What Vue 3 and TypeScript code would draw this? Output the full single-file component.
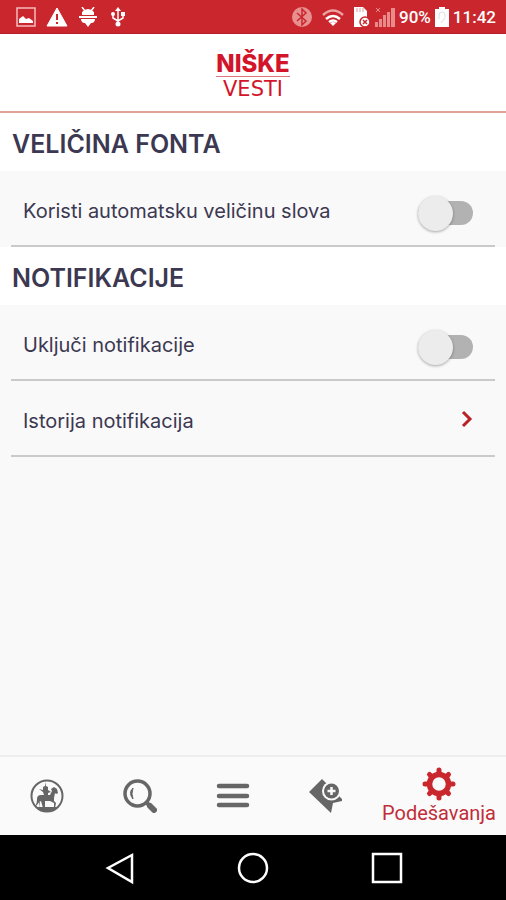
<script setup lang="ts">
import { ref } from 'vue'

const autoFont = ref(false)
const notifications = ref(false)
const activeTab = ref('settings')
</script>

<template>
  <div class="screen">
    <div class="status">
      <div class="status-left">
        <svg width="20" height="20" viewBox="0 0 20 20" aria-hidden="true">
          <path d="M1 1h18v18H1z" fill="none" stroke="#f5bcbc" stroke-width="1.5" />
          <path d="M3 16v-4l4-3 3 3 3-1 4 3v2z" fill="#fff" />
        </svg>
        <svg width="22" height="20" viewBox="0 0 22 20" aria-hidden="true">
          <path d="M11 1 21 19H1z" fill="#fff" stroke="#fff" stroke-linejoin="round" />
          <path d="M11 7v6M11 15v2" stroke="#c9272d" stroke-width="2" />
        </svg>
        <svg width="20" height="20" viewBox="0 0 20 20" aria-hidden="true">
          <path d="m4 0 3 4M16 0l-3 4" stroke="#fff" stroke-width="1.5" />
          <path d="M4 8V5q3-3 6-3t6 3v3zM1 9h18v2H1zM3 12h14q0 3-3 4h-1l-3 4-3-4H6q-3-1-3-4z" fill="#fff" />
        </svg>
        <svg width="20" height="20" viewBox="-3 0 20 20" aria-hidden="true">
          <path d="M7 3v14M7 14 2 11V6M7 14l5-3V7" fill="none" stroke="#fff" stroke-width="1.5" />
          <path d="m7 0 3 4H4zM10 5h4v4h-4z" fill="#fff" />
          <circle cx="2" cy="7" r="2" fill="#fff" />
          <circle cx="7" cy="17" r="2.5" fill="#fff" />
        </svg>
      </div>
      <div class="status-right">
        <svg width="22" height="22" viewBox="0 0 22 22" aria-hidden="true">
          <circle cx="11" cy="11" r="10" fill="#e88f8f" />
          <path d="m6 7 9 8-4 4V3l4 4-9 8" fill="none" stroke="#c9272d" stroke-width="1.5" />
        </svg>
        <svg class="wifi" width="24" height="20" viewBox="0 0 24 20" aria-hidden="true">
          <path d="M2 8q10-9 20 0" fill="none" stroke="#eda1a1" stroke-width="2.5" />
          <path d="M5 12q7-6 14 0M8 15q4-3 8 0" fill="none" stroke="#fff" stroke-width="2.5" />
          <path d="m9 16 3 3 3-3q-3-2-6 0z" fill="#fff" />
        </svg>
        <svg width="18" height="22" viewBox="0 0 18 22" aria-hidden="true">
          <path d="M1 1h9l4 4v16H1z" fill="#fff" />
          <path d="M4 2v4M7 2v4M10 2v4" stroke="#d99" />
          <circle cx="12" cy="16" r="5" fill="#fff" stroke="#c9272d" stroke-width="1.5" />
          <path d="m10 14 4 4m0-4-4 4" stroke="#c9272d" stroke-width="1.5" />
        </svg>
        <svg width="20" height="20" viewBox="0 0 20 20" aria-hidden="true">
          <path d="M0 15h3v5H0zM4 12h3v8H4zM8 8h3v12H8zM12 5h3v15h-3zM16 1h4v19h-4z" fill="#e98b8b" />
          <path d="m1 1 4 4m0-4L1 5" stroke="#e98b8b" />
        </svg>
        <span>90%</span>
        <svg width="14" height="20" viewBox="0 0 14 20" aria-hidden="true">
          <path d="M4 0h6v2h4v18H0V2h4z" fill="#fff" />
          <path d="M4 12V8q0-3 3-3t3 3v3L6 16" fill="none" stroke="#ddd" />
        </svg>
        <span>11:42</span>
      </div>
    </div>

    <header class="header">
      <div class="logo">
        <span class="logo-top">NIŠKE</span>
        <span class="logo-bottom">VESTI</span>
      </div>
    </header>

    <main class="content">
      <section>
        <h2>VELIČINA FONTA</h2>
        <div class="rows">
          <label class="row">
            <span>Koristi automatsku veličinu slova</span>
            <input v-model="autoFont" class="switch" type="checkbox" role="switch">
          </label>
        </div>
      </section>
      <section>
        <h2>NOTIFIKACIJE</h2>
        <div class="rows">
          <label class="row">
            <span>Uključi notifikacije</span>
            <input v-model="notifications" class="switch" type="checkbox" role="switch">
          </label>
          <a class="row" href="#istorija">
            <span>Istorija notifikacija</span>
            <svg class="chevron" width="12" height="18" viewBox="0 0 12 18" aria-hidden="true">
              <path d="m2 2 7 7-7 7" fill="none" stroke="#b92127" stroke-width="3" />
            </svg>
          </a>
        </div>
      </section>
    </main>

    <nav class="tabs">
      <button class="tab" type="button" aria-label="Početna" @click="activeTab = 'home'">
        <svg width="34" height="34" viewBox="0 0 34 34" aria-hidden="true">
          <circle cx="17" cy="17" r="15.5" fill="none" stroke="#666" stroke-width="2" />
          <path d="M5 27q2-2 2-7 0-4 4-4h3l-1-3-4-3 4 1V8l2-1V3l1 4 2 1v3l3 2-3 1v2h2l2-4-1-2 3-2 3 2 1 4-2 1-1-1-1 5v3l2 2-1 5-1-1v-4l-4-2h-5v7h-2l-2-7-2 1v6H9l1-7q-2 3-5 6z" fill="#666" />
          <path d="M7 28h20q-4 5-10 5T7 28z" fill="#666" />
        </svg>
      </button>
      <button class="tab" type="button" aria-label="Pretraga" @click="activeTab = 'search'">
        <svg width="34" height="34" viewBox="0 0 34 34" aria-hidden="true">
          <circle cx="14.5" cy="14.5" r="12.5" fill="none" stroke="#666" stroke-width="3.5" />
          <path d="M10 9q-5 5 0 11-2-5 0-11z" fill="#666" stroke="#666" />
          <path d="m23 23 4 4" stroke="#666" stroke-width="4" />
          <path d="m27 27 4 4" stroke="#666" stroke-width="6" stroke-linecap="round" />
        </svg>
      </button>
      <button class="tab" type="button" aria-label="Meni" @click="activeTab = 'menu'">
        <svg width="34" height="34" viewBox="0 0 34 34" aria-hidden="true">
          <path d="M3 7h28M3 17h28M3 26h28" stroke="#666" stroke-width="4.5" stroke-linecap="round" />
        </svg>
      </button>
      <button class="tab" type="button" aria-label="Sačuvano" @click="activeTab = 'saved'">
        <svg width="34" height="34" viewBox="0 0 34 34" aria-hidden="true">
          <path d="M13 0 33 20v2l-9 2-2 10L0 13z" fill="#666" />
          <circle cx="22.5" cy="12" r="9.5" fill="#fafafa" />
          <circle cx="22.5" cy="12" r="7.5" fill="#666" />
          <path d="M22.500 8v8M18.500 12h8" stroke="#fafafa" stroke-width="2.500" />
        </svg>
      </button>
      <button class="tab tab-wide" type="button" :aria-current="activeTab === 'settings' ? 'page' : undefined" @click="activeTab = 'settings'">
        <svg width="34" height="34" viewBox="0 0 34 34" aria-hidden="true">
          <path d="M17 3v5M17 26v5M3 17h5M26 17h5M7.500 7.500l3 3M23.500 23.500l3 3M7.500 26.500l3-3M23.500 10.500l3-3" stroke="#c9272d" stroke-width="5" stroke-linecap="round" />
          <circle cx="17" cy="17" r="9.500" fill="#fafafa" stroke="#c9272d" stroke-width="5.500" />
        </svg>
        <span>Podešavanja</span>
      </button>
    </nav>

    <div class="system">
      <button type="button" aria-label="Nazad">
        <svg width="32" height="34" viewBox="0 0 32 34" aria-hidden="true">
          <path d="M29 4v27L5 17z" fill="none" stroke="#fff" stroke-width="2.500" />
        </svg>
      </button>
      <button type="button" aria-label="Početni ekran">
        <svg width="32" height="34" viewBox="0 0 32 34" aria-hidden="true">
          <circle cx="16" cy="17" r="14" fill="none" stroke="#fff" stroke-width="2.500" />
        </svg>
      </button>
      <button type="button" aria-label="Nedavno">
        <svg width="32" height="34" viewBox="0 0 32 34" aria-hidden="true">
          <path d="M2 3h28v28H2z" fill="none" stroke="#fff" stroke-width="2.500" />
        </svg>
      </button>
    </div>
  </div>
</template>

<style>
body {
  margin: 0;
}
</style>

<style scoped>
.screen {
  display: flex;
  flex-direction: column;
  min-height: 100vh;
  background: #f9f9f9;
  color: #3c3851;
  font-family: Inter, "Liberation Sans", sans-serif;
}

svg {
  display: block;
  flex: none;
}

.status {
  display: flex;
  align-items: center;
  justify-content: space-between;
  height: 34px;
  padding: 0 10px 0 16px;
  background: #c9272d;
  border-bottom: 1px solid #b32025;
  box-sizing: border-box;
  color: #fff;
  font: 500 17px/24px Roboto, sans-serif;
}

.status-left {
  display: flex;
  align-items: center;
  gap: 10px;
}

.status-right {
  display: flex;
  align-items: center;
  gap: 4px;
}

.wifi {
  margin: 0 4px;
}

.header {
  display: flex;
  justify-content: center;
  align-items: center;
  height: 79px;
  padding-top: 8px;
  box-sizing: border-box;
  background: #fff;
  border-bottom: 2px solid #e0a198;
}

.logo {
  display: flex;
  flex-direction: column;
  align-items: center;
  color: #d2152b;
}

.logo-top {
  border-bottom: 1px solid #e27680;
  font-size: 24px;
  font-weight: 800;
  line-height: 24px;
}

.logo-bottom {
  font-family: "DejaVu Sans", sans-serif;
  font-size: 21px;
  line-height: 24px;
}

.content {
  flex: 1;
}

h2 {
  margin: 0;
  padding: 15px 12px 11px;
  background: #fff;
  font-size: 25px;
  font-weight: 600;
  line-height: 32px;
}

.rows {
  padding: 0 11px;
}

.row {
  display: flex;
  align-items: center;
  justify-content: space-between;
  height: 76px;
  padding: 6px 22px 0 12px;
  box-sizing: border-box;
  border-bottom: 2px solid #cacaca;
  color: inherit;
  font-size: 20px;
  line-height: 28px;
  text-decoration: none;
}

.chevron {
  margin-bottom: 4px;
}

.switch {
  display: flex;
  align-items: center;
  appearance: none;
  width: 55px;
  height: 24px;
  margin: 4px 0 0;
  border-radius: 12px;
  background: #b2b2b2;
}

.switch::before {
  content: "";
  width: 35px;
  height: 35px;
  flex: none;
  border-radius: 50%;
  background: #ececec;
  box-shadow: 0 1px 3px #0005;
}

.switch:checked {
  justify-content: flex-end;
}

.tabs {
  display: flex;
  height: 80px;
  padding-left: 1px;
  border-top: 2px solid #eee;
  box-sizing: border-box;
  background: #fafafa;
}

.tab {
  display: flex;
  flex: 9 1 0;
  min-width: 0;
  flex-direction: column;
  align-items: center;
  justify-content: center;
  padding: 0;
  border: 0;
  background: none;
  color: #c02e3a;
  font: 20px/24px Roboto, sans-serif;
}

.tab-wide {
  flex-grow: 13;
}

.system {
  display: flex;
  justify-content: center;
  align-items: center;
  gap: 102px;
  height: 65px;
  background: #000;
}

.system button {
  padding: 0;
  border: 0;
  background: none;
}
</style>
